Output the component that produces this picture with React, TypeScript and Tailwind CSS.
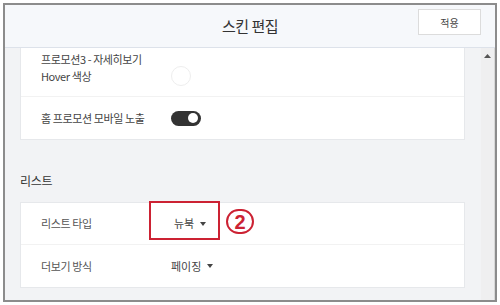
// Skin editor panel: list settings section

const font = { fontFamily: '"Noto Sans CJK KR", "Noto Sans", sans-serif' }

function Caret() {
  return (
    <svg width="6" height="4" viewBox="0 0 6 4" className="ml-[6px]">
      <path d="M0 0 L6 0 L3 4 Z" fill="#444" />
    </svg>
  )
}

function Toggle() {
  return (
    <div className="w-[30px] h-[15px] rounded-full bg-[#333] flex items-center justify-end pr-[3px]">
      <div className="w-[10px] h-[10px] rounded-full bg-white" />
    </div>
  )
}

export default function App() {
  return (
    <div className="w-[500px] h-[305px] bg-white p-[3px]" style={font}>
      <div className="w-[494px] h-[299px] border-2 border-[#8c8c8c] flex flex-col overflow-hidden">
        {/* Header */}
        <div className="h-[43px] shrink-0 bg-[#f6f8fb] border-b border-[#dde2ea] relative flex items-center justify-center">
          <span className="text-[15px] text-[#333] tracking-[-0.5px]">스킨 편집</span>
          <button className="absolute right-[14px] top-[4px] w-[63px] h-[26px] bg-white border border-[#dcdcdc] text-[10px] text-[#444]">
            적용
          </button>
        </div>

        {/* Body */}
        <div className="flex-1 flex bg-[#f2f3f5] min-h-0">
          <div className="flex-1 pl-[15px] pr-[16px] relative">
            {/* Card 1 (scrolled) */}
            <div className="bg-white border border-t-0 border-[#e6e8eb]">
              <div className="h-[49px] flex border-b border-[#f2f2f2] pl-[20px]">
                <div className="w-[130px] pt-[3px] text-[11px] leading-[17px] text-[#444] tracking-[-0.4px]">
                  <div>프로모션3 - 자세히보기</div>
                  <div>Hover 색상</div>
                </div>
                <div className="self-end mb-[10px] w-[20px] h-[20px] rounded-full bg-white border border-[#eeeeee]" />
              </div>
              <div className="h-[42px] flex items-center pl-[20px]">
                <div className="w-[130px] text-[11px] text-[#444] tracking-[-0.4px]">홈 프로모션 모바일 노출</div>
                <Toggle />
              </div>
            </div>

            {/* List section */}
            <div className="h-[62px] flex items-end pb-[12px]">
              <span className="text-[12px] text-[#333] tracking-[-0.3px]">리스트</span>
            </div>
            <div className="bg-white border border-[#e6e8eb]">
              <div className="h-[42px] flex items-center pl-[20px] border-b border-[#f2f2f2]">
                <div className="w-[133px] text-[11px] text-[#555] tracking-[-0.4px]">리스트 타입</div>
                <div className="flex items-center text-[11px] text-[#444]">
                  뉴북
                  <Caret />
                </div>
              </div>
              <div className="h-[42px] flex items-center pl-[20px]">
                <div className="w-[130px] text-[11px] text-[#555] tracking-[-0.4px]">더보기 방식</div>
                <div className="flex items-center text-[11px] text-[#444]">
                  페이징
                  <Caret />
                </div>
              </div>
            </div>

            {/* Annotation */}
            <div className="absolute left-[144px] top-[153px] w-[71px] h-[39px] border-2 border-[#cc2233]" />
            <div
              className="absolute left-[221px] top-[161px] w-[28px] h-[25px] rounded-full border-[2.5px] border-[#cc2233] flex items-center justify-center text-[20px] leading-none font-bold text-[#cc2233]"
              style={{ fontFamily: '"Liberation Sans", Arial, sans-serif' }}
            >
              2
            </div>
          </div>

          {/* Scrollbar */}
          <div className="w-[14px] bg-[#efeff0] border-r border-[#d8d8d8] flex justify-center pt-[6px]">
            <svg width="7" height="4" viewBox="0 0 7 4">
              <path d="M0 4 L7 4 L3.5 0 Z" fill="#555" />
            </svg>
          </div>
        </div>
      </div>
    </div>
  )
}
